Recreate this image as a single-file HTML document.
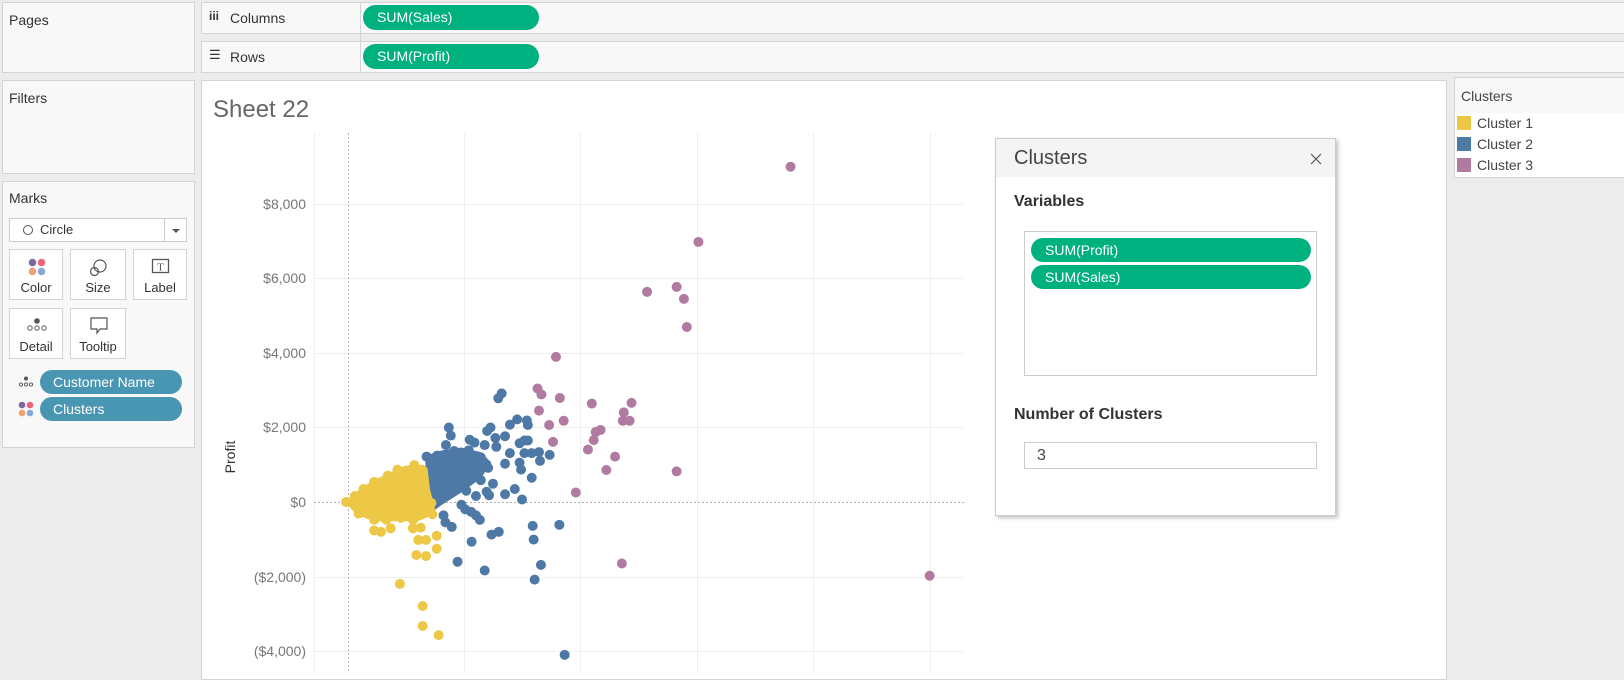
<!DOCTYPE html>
<html><head><meta charset="utf-8"><style>
*{box-sizing:border-box;margin:0;padding:0}
body{width:1624px;height:671px;overflow:hidden;background:#ececec;font-family:"Liberation Sans",sans-serif;position:relative;color:#333}
.p{position:absolute;background:#f8f8f8;border:1px solid #d4d4d4}
.lbl{position:absolute;font-size:14px;color:#333}
.pill{position:absolute;background:#00b180;color:#fff;font-size:14px;border-radius:13px;padding-left:14px;line-height:24px}
.bp{position:absolute;background:#4996b2;color:#fff;font-size:14px;border-radius:12px;padding-left:13px;line-height:24px}
.btn{position:absolute;background:#fff;border:1px solid #d4d4d4;font-size:13px;text-align:center;color:#333}
.btn span{position:absolute;left:0;right:0;bottom:4px}
.ax{position:absolute;font-size:14px;color:#777;text-align:right;width:100px}
</style></head><body>
<div class="p" style="left:2px;top:2px;width:193px;height:71px"></div>
<div class="lbl" style="left:9px;top:12px">Pages</div>
<div class="p" style="left:201px;top:2px;width:1430px;height:32px"></div>
<div class="p" style="left:201px;top:41px;width:1430px;height:32px"></div>
<div style="position:absolute;left:360px;top:2px;width:1px;height:71px;background:#d4d4d4"></div>
<div class="lbl" style="left:209px;top:9px;font-weight:bold;font-size:12px">iii</div>
<div class="lbl" style="left:230px;top:10px">Columns</div>
<div class="lbl" style="left:209px;top:47px;font-size:13px">☰</div>
<div class="lbl" style="left:230px;top:49px">Rows</div>
<div class="pill" style="left:363px;top:5px;width:176px;height:25px">SUM(Sales)</div>
<div class="pill" style="left:363px;top:44px;width:176px;height:25px">SUM(Profit)</div>
<div class="p" style="left:2px;top:80px;width:193px;height:94px"></div>
<div class="lbl" style="left:9px;top:90px">Filters</div>
<div class="p" style="left:2px;top:181px;width:193px;height:267px"></div>
<div class="lbl" style="left:9px;top:190px">Marks</div>
<div style="position:absolute;left:9px;top:218px;width:178px;height:24px;background:#fff;border:1px solid #ccc"></div>
<div style="position:absolute;left:164px;top:218px;width:1px;height:24px;background:#ccc"></div>
<div style="position:absolute;left:23px;top:225px;width:10px;height:10px;border:1.3px solid #555;border-radius:50%"></div>
<div class="lbl" style="left:40px;top:222px;font-size:13px">Circle</div>
<div style="position:absolute;left:172px;top:229px;border-left:4px solid transparent;border-right:4px solid transparent;border-top:4px solid #555"></div>
<div class="btn" style="left:9px;top:249px;width:54px;height:51px"><svg style="position:absolute;left:18px;top:8px" width="18" height="18"><circle cx="4.5" cy="4.5" r="3.8" fill="#7b6a9e"/><circle cx="13.5" cy="4.5" r="3.8" fill="#e9677a"/><circle cx="4.5" cy="13.5" r="3.8" fill="#f2a073"/><circle cx="13.5" cy="13.5" r="3.8" fill="#86a9d6"/></svg><span>Color</span></div>
<div class="btn" style="left:70px;top:249px;width:56px;height:51px"><svg style="position:absolute;left:18px;top:8px" width="20" height="20" fill="none" stroke="#555" stroke-width="1.2"><circle cx="11" cy="8" r="6"/><circle cx="5.5" cy="13.5" r="4"/></svg><span>Size</span></div>
<div class="btn" style="left:133px;top:249px;width:54px;height:51px"><svg style="position:absolute;left:17px;top:8px" width="20" height="18"><rect x="1.5" y="1.5" width="16" height="13" fill="none" stroke="#555" stroke-width="1.3"/><text x="9.5" y="12.5" font-size="11" text-anchor="middle" fill="#555" font-family="Liberation Serif">T</text></svg><span>Label</span></div>
<div class="btn" style="left:9px;top:308px;width:54px;height:51px"><svg style="position:absolute;left:16px;top:8px" width="22" height="16" fill="none" stroke="#555"><circle cx="11" cy="4" r="2.3" fill="#555"/><circle cx="4" cy="11" r="2.2"/><circle cx="11" cy="11" r="2.2"/><circle cx="18" cy="11" r="2.2"/></svg><span>Detail</span></div>
<div class="btn" style="left:70px;top:308px;width:56px;height:51px"><svg style="position:absolute;left:18px;top:7px" width="20" height="20" fill="none" stroke="#555" stroke-width="1.2"><path d="M2 2H18V13H11L8 17V13H2Z"/></svg><span>Tooltip</span></div>
<svg style="position:absolute;left:18px;top:376px" width="16" height="12" fill="none" stroke="#555" stroke-width=".9"><circle cx="8" cy="2.5" r="1.6" fill="#555"/><circle cx="3" cy="8.5" r="1.6"/><circle cx="8" cy="8.5" r="1.6"/><circle cx="13" cy="8.5" r="1.6"/></svg>
<svg style="position:absolute;left:18px;top:401px" width="16" height="16"><circle cx="4" cy="4" r="3.3" fill="#7b6a9e"/><circle cx="12" cy="4" r="3.3" fill="#e9677a"/><circle cx="4" cy="12" r="3.3" fill="#f2a073"/><circle cx="12" cy="12" r="3.3" fill="#86a9d6"/></svg>
<div class="bp" style="left:40px;top:370px;width:142px;height:24px">Customer Name</div>
<div class="bp" style="left:40px;top:397px;width:142px;height:24px">Clusters</div>
<div style="position:absolute;left:201px;top:80px;width:1246px;height:600px;background:#fff;border:1px solid #d4d4d4"></div>
<div style="position:absolute;left:213px;top:96px;font-size:24px;color:#666">Sheet 22</div>
<svg style="position:absolute;left:0;top:0" width="1624" height="671">
<g stroke="#efefef" stroke-width="1">
<line x1="314.5" y1="133" x2="314.5" y2="671"/><line x1="464.5" y1="133" x2="464.5" y2="671"/><line x1="580.5" y1="133" x2="580.5" y2="671"/><line x1="697.5" y1="133" x2="697.5" y2="671"/><line x1="813.5" y1="133" x2="813.5" y2="671"/><line x1="930.5" y1="133" x2="930.5" y2="671"/>
<line x1="314" y1="204.5" x2="964" y2="204.5"/><line x1="314" y1="278.5" x2="964" y2="278.5"/><line x1="314" y1="353.5" x2="964" y2="353.5"/><line x1="314" y1="427.5" x2="964" y2="427.5"/><line x1="314" y1="577.5" x2="964" y2="577.5"/><line x1="314" y1="651.5" x2="964" y2="651.5"/>
</g>
<g stroke="#b0b0b0" stroke-dasharray="2,2"><line x1="348.5" y1="133" x2="348.5" y2="671"/><line x1="314" y1="502.5" x2="964" y2="502.5"/></g>
<g transform="translate(190,120) scale(0.4847,0.3514)">
<g fill="#4e79a7">
<polygon points="485,955 520,940 560,932 600,945 622,975 600,1020 560,1060 520,1095 500,1115 488,1060"/>
<ellipse cx="636" cy="792" rx="10.3" ry="14.2"/><ellipse cx="643" cy="778" rx="10.3" ry="14.2"/><ellipse cx="534" cy="875" rx="10.3" ry="14.2"/><ellipse cx="538" cy="898" rx="10.3" ry="14.2"/><ellipse cx="613" cy="885" rx="10.3" ry="14.2"/><ellipse cx="620" cy="875" rx="10.3" ry="14.2"/><ellipse cx="660" cy="867" rx="10.3" ry="14.2"/><ellipse cx="675" cy="852" rx="10.3" ry="14.2"/><ellipse cx="695" cy="855" rx="10.3" ry="14.2"/><ellipse cx="697" cy="868" rx="10.3" ry="14.2"/><ellipse cx="577" cy="910" rx="10.3" ry="14.2"/><ellipse cx="587" cy="918" rx="10.3" ry="14.2"/><ellipse cx="608" cy="925" rx="10.3" ry="14.2"/><ellipse cx="630" cy="905" rx="10.3" ry="14.2"/><ellipse cx="632" cy="930" rx="10.3" ry="14.2"/><ellipse cx="650" cy="900" rx="10.3" ry="14.2"/><ellipse cx="690" cy="912" rx="10.3" ry="14.2"/><ellipse cx="697" cy="912" rx="10.3" ry="14.2"/><ellipse cx="680" cy="920" rx="10.3" ry="14.2"/><ellipse cx="742" cy="953" rx="10.3" ry="14.2"/><ellipse cx="720" cy="945" rx="10.3" ry="14.2"/><ellipse cx="722" cy="970" rx="10.3" ry="14.2"/><ellipse cx="705" cy="948" rx="10.3" ry="14.2"/><ellipse cx="690" cy="948" rx="10.3" ry="14.2"/><ellipse cx="680" cy="975" rx="10.3" ry="14.2"/><ellipse cx="683" cy="995" rx="10.3" ry="14.2"/><ellipse cx="660" cy="948" rx="10.3" ry="14.2"/><ellipse cx="650" cy="978" rx="10.3" ry="14.2"/><ellipse cx="705" cy="1018" rx="10.3" ry="14.2"/><ellipse cx="625" cy="1035" rx="10.3" ry="14.2"/><ellipse cx="670" cy="1050" rx="10.3" ry="14.2"/><ellipse cx="650" cy="1065" rx="10.3" ry="14.2"/><ellipse cx="685" cy="1080" rx="10.3" ry="14.2"/><ellipse cx="617" cy="1068" rx="10.3" ry="14.2"/><ellipse cx="612" cy="1058" rx="10.3" ry="14.2"/><ellipse cx="590" cy="1070" rx="10.3" ry="14.2"/><ellipse cx="560" cy="1095" rx="10.3" ry="14.2"/><ellipse cx="568" cy="1108" rx="10.3" ry="14.2"/><ellipse cx="580" cy="1115" rx="10.3" ry="14.2"/><ellipse cx="590" cy="1125" rx="10.3" ry="14.2"/><ellipse cx="598" cy="1138" rx="10.3" ry="14.2"/><ellipse cx="523" cy="1125" rx="10.3" ry="14.2"/><ellipse cx="527" cy="1145" rx="10.3" ry="14.2"/><ellipse cx="540" cy="1158" rx="10.3" ry="14.2"/><ellipse cx="707" cy="1155" rx="10.3" ry="14.2"/><ellipse cx="762" cy="1152" rx="10.3" ry="14.2"/><ellipse cx="709" cy="1194" rx="10.3" ry="14.2"/><ellipse cx="637" cy="1172" rx="10.3" ry="14.2"/><ellipse cx="622" cy="1180" rx="10.3" ry="14.2"/><ellipse cx="581" cy="1200" rx="10.3" ry="14.2"/><ellipse cx="552" cy="1257" rx="10.3" ry="14.2"/><ellipse cx="608" cy="1282" rx="10.3" ry="14.2"/><ellipse cx="724" cy="1266" rx="10.3" ry="14.2"/><ellipse cx="711" cy="1308" rx="10.3" ry="14.2"/><ellipse cx="773" cy="1522" rx="10.3" ry="14.2"/><ellipse cx="488" cy="958" rx="10.3" ry="14.2"/><ellipse cx="510" cy="955" rx="10.3" ry="14.2"/><ellipse cx="528" cy="925" rx="10.3" ry="14.2"/><ellipse cx="545" cy="942" rx="10.3" ry="14.2"/><ellipse cx="575" cy="940" rx="10.3" ry="14.2"/><ellipse cx="600" cy="960" rx="10.3" ry="14.2"/><ellipse cx="615" cy="990" rx="10.3" ry="14.2"/><ellipse cx="590" cy="1000" rx="10.3" ry="14.2"/><ellipse cx="600" cy="1025" rx="10.3" ry="14.2"/><ellipse cx="570" cy="1055" rx="10.3" ry="14.2"/>
</g>
<g fill="#ecc846">
<polygon points="322,1087 340,1062 355,1045 380,1025 410,1005 430,990 465,978 490,990 495,1050 508,1120 470,1142 430,1142 380,1142 345,1125 328,1100"/>
<ellipse cx="322" cy="1087" rx="10.3" ry="14.2"/><ellipse cx="340" cy="1070" rx="10.3" ry="14.2"/><ellipse cx="358" cy="1050" rx="10.3" ry="14.2"/><ellipse cx="380" cy="1030" rx="10.3" ry="14.2"/><ellipse cx="408" cy="1012" rx="10.3" ry="14.2"/><ellipse cx="428" cy="995" rx="10.3" ry="14.2"/><ellipse cx="445" cy="998" rx="10.3" ry="14.2"/><ellipse cx="463" cy="982" rx="10.3" ry="14.2"/><ellipse cx="478" cy="995" rx="10.3" ry="14.2"/><ellipse cx="348" cy="1120" rx="10.3" ry="14.2"/><ellipse cx="380" cy="1138" rx="10.3" ry="14.2"/><ellipse cx="405" cy="1138" rx="10.3" ry="14.2"/><ellipse cx="435" cy="1132" rx="10.3" ry="14.2"/><ellipse cx="460" cy="1138" rx="10.3" ry="14.2"/><ellipse cx="500" cy="1122" rx="10.3" ry="14.2"/><ellipse cx="498" cy="1090" rx="10.3" ry="14.2"/>
<ellipse cx="380" cy="1168" rx="10.3" ry="14.2"/><ellipse cx="394" cy="1172" rx="10.3" ry="14.2"/><ellipse cx="414" cy="1162" rx="10.3" ry="14.2"/><ellipse cx="460" cy="1162" rx="10.3" ry="14.2"/><ellipse cx="476" cy="1160" rx="10.3" ry="14.2"/><ellipse cx="509" cy="1183" rx="10.3" ry="14.2"/><ellipse cx="471" cy="1195" rx="10.3" ry="14.2"/><ellipse cx="487" cy="1195" rx="10.3" ry="14.2"/><ellipse cx="509" cy="1220" rx="10.3" ry="14.2"/><ellipse cx="467" cy="1238" rx="10.3" ry="14.2"/><ellipse cx="487" cy="1241" rx="10.3" ry="14.2"/><ellipse cx="433" cy="1320" rx="10.3" ry="14.2"/><ellipse cx="480" cy="1383" rx="10.3" ry="14.2"/><ellipse cx="480" cy="1440" rx="10.3" ry="14.2"/><ellipse cx="513" cy="1466" rx="10.3" ry="14.2"/>
</g>
<g fill="#b07aa1">
<ellipse cx="1239" cy="133" rx="10.3" ry="14.2"/><ellipse cx="1049" cy="347" rx="10.3" ry="14.2"/><ellipse cx="943" cy="489" rx="10.3" ry="14.2"/><ellipse cx="1004" cy="475" rx="10.3" ry="14.2"/><ellipse cx="1019" cy="509" rx="10.3" ry="14.2"/><ellipse cx="1025" cy="589" rx="10.3" ry="14.2"/><ellipse cx="755" cy="674" rx="10.3" ry="14.2"/><ellipse cx="717" cy="764" rx="10.3" ry="14.2"/><ellipse cx="725" cy="781" rx="10.3" ry="14.2"/><ellipse cx="763" cy="791" rx="10.3" ry="14.2"/><ellipse cx="720" cy="827" rx="10.3" ry="14.2"/><ellipse cx="829" cy="807" rx="10.3" ry="14.2"/><ellipse cx="911" cy="805" rx="10.3" ry="14.2"/><ellipse cx="895" cy="832" rx="10.3" ry="14.2"/><ellipse cx="893" cy="856" rx="10.3" ry="14.2"/><ellipse cx="907" cy="856" rx="10.3" ry="14.2"/><ellipse cx="741" cy="868" rx="10.3" ry="14.2"/><ellipse cx="771" cy="856" rx="10.3" ry="14.2"/><ellipse cx="837" cy="888" rx="10.3" ry="14.2"/><ellipse cx="847" cy="882" rx="10.3" ry="14.2"/><ellipse cx="833" cy="911" rx="10.3" ry="14.2"/><ellipse cx="749" cy="916" rx="10.3" ry="14.2"/><ellipse cx="821" cy="938" rx="10.3" ry="14.2"/><ellipse cx="877" cy="958" rx="10.3" ry="14.2"/><ellipse cx="859" cy="996" rx="10.3" ry="14.2"/><ellipse cx="1004" cy="1000" rx="10.3" ry="14.2"/><ellipse cx="796" cy="1060" rx="10.3" ry="14.2"/><ellipse cx="891" cy="1262" rx="10.3" ry="14.2"/><ellipse cx="1526" cy="1297" rx="10.3" ry="14.2"/>
</g>
</g>
</svg>
<div class="ax" style="left:206px;top:196px">$8,000</div>
<div class="ax" style="left:206px;top:270px">$6,000</div>
<div class="ax" style="left:206px;top:345px">$4,000</div>
<div class="ax" style="left:206px;top:419px">$2,000</div>
<div class="ax" style="left:206px;top:494px">$0</div>
<div class="ax" style="left:206px;top:569px">($2,000)</div>
<div class="ax" style="left:206px;top:643px">($4,000)</div>
<div style="position:absolute;left:207px;top:449px;width:46px;text-align:center;font-size:14px;color:#333;transform:rotate(-90deg)">Profit</div>
<div style="position:absolute;left:995px;top:138px;width:341px;height:378px;background:#fff;border:1px solid #ccc;box-shadow:2px 2px 4px rgba(0,0,0,.25)">
<div style="height:38px;background:#f4f4f4;padding-left:18px;font-size:20px;line-height:38px;color:#444">Clusters</div>
<svg style="position:absolute;left:314px;top:14px" width="12" height="12" stroke="#555" stroke-width="1.2"><path d="M1 1L11 11M11 1L1 11"/></svg>
<div style="position:absolute;left:18px;top:54px;font-size:16px;font-weight:bold;color:#333">Variables</div>
<div style="position:absolute;left:28px;top:92px;width:293px;height:145px;border:1px solid #ccc"></div>
<div class="pill" style="left:35px;top:99px;width:280px;height:24px">SUM(Profit)</div>
<div class="pill" style="left:35px;top:126px;width:280px;height:24px">SUM(Sales)</div>
<div style="position:absolute;left:18px;top:267px;font-size:16px;font-weight:bold;color:#333">Number of Clusters</div>
<div style="position:absolute;left:28px;top:303px;width:293px;height:27px;border:1px solid #ccc;font-size:16px;color:#444;padding-left:12px;line-height:25px">3</div>
</div>
<div style="position:absolute;left:1454px;top:77px;width:180px;height:101px;background:#fff;border:1px solid #d4d4d4"></div>
<div style="position:absolute;left:1455px;top:78px;width:180px;height:35px;background:#f8f8f8"></div>
<div class="lbl" style="left:1461px;top:88px;color:#444">Clusters</div>
<div style="position:absolute;left:1457px;top:116px;width:14px;height:14px;background:#ecc846"></div>
<div style="position:absolute;left:1457px;top:137px;width:14px;height:14px;background:#4e79a7"></div>
<div style="position:absolute;left:1457px;top:158px;width:14px;height:14px;background:#b07aa1"></div>
<div class="lbl" style="left:1477px;top:115px;color:#444">Cluster 1</div>
<div class="lbl" style="left:1477px;top:136px;color:#444">Cluster 2</div>
<div class="lbl" style="left:1477px;top:157px;color:#444">Cluster 3</div>
</body></html>
